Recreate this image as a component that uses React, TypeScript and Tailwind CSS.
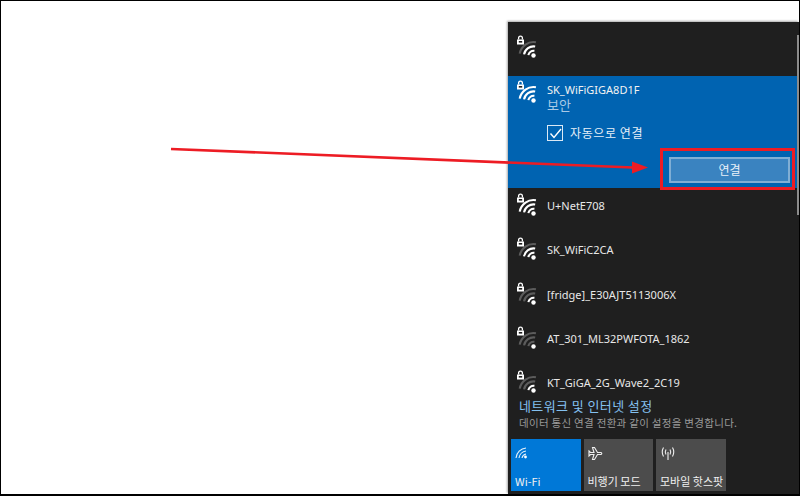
const font = "[font-family:'Noto_Sans','Noto_Sans_CJK_KR',sans-serif]";
const kr = "[font-family:'Noto_Sans_CJK_KR','Noto_Sans',sans-serif]";

function Wifi({ level }: { level: number }) {
  const arc = (r: number, on: boolean, key: number) => (
    <path
      key={key}
      d={`M${17.5 - r} 21 A${r} ${r} 0 0 1 17.5 ${21 - r}`}
      fill="none"
      stroke={on ? "#ffffff" : "#5c5c5c"}
      strokeWidth="2.1"
      transform="rotate(10 17.5 21)"
    />
  );
  return (
    <svg width="26" height="24" viewBox="0 0 26 24" className="shrink-0">
      {arc(5.2, level >= 2, 1)}
      {arc(9.6, level >= 3, 2)}
      {arc(14, level >= 4, 3)}
      <circle cx="17.5" cy="20.5" r="2.2" fill="#ffffff" />
      <rect x="1" y="4.5" width="7" height="5" fill="#ffffff" />
      <path d="M2.6 4.5 V3 a1.9 1.9 0 0 1 3.8 0 V4.5" fill="none" stroke="#ffffff" strokeWidth="1.3" />
      <rect x="2.8" y="6" width="3.4" height="1.6" fill="#1f1f1f" />
    </svg>
  );
}

function Row({ name, level }: { name: string; level: number }) {
  return (
    <div className="flex h-[44.3px] shrink-0 items-start pl-[8px] pt-[5px]">
      <Wifi level={level} />
      <span className="ml-[5px] mt-[4px] text-[11px] leading-[18px] text-[#e8e8e8]">{name}</span>
    </div>
  );
}

function Tile({ label, active, children }: { label: string; active?: boolean; children: React.ReactNode }) {
  return (
    <div className={`flex h-[52px] w-[69.5px] flex-col justify-between px-[4px] pb-[2px] pt-[7px] ${active ? "bg-[#0078d7]" : "bg-[#4c4c4c]"}`}>
      <div className="h-[16px]">{children}</div>
      <span className={`whitespace-nowrap text-[11px] leading-[16px] text-[#f0f0f0] ${kr}`}>{label}</span>
    </div>
  );
}

export default function App() {
  return (
    <div className={`relative flex h-[496px] w-[800px] justify-end overflow-hidden border-x border-t border-b-2 border-black bg-white ${font}`}>
      <div className="mt-[21px] flex w-[291px] flex-col bg-[#1f1f1f] shadow-[-1px_-1px_2px_rgba(0,0,0,0.35)]">
        <div className="flex h-[372px] flex-col overflow-hidden">
          <div className="h-[54px] shrink-0 pl-[8px] pt-[13px]">
            <Wifi level={3} />
          </div>
          <div className="h-[112px] shrink-0 bg-[#0063b1] pl-[8px] pt-[4px]">
            <div className="flex items-start">
              <Wifi level={4} />
              <div className="ml-[5px] mt-[2px]">
                <div className="text-[11px] leading-[15px] text-[#f2f2f2]">SK_WiFiGIGA8D1F</div>
                <div className={`mt-[1px] text-[13px] leading-[14px] text-[#a9c9e6] ${kr}`}>보안</div>
              </div>
            </div>
            <div className="ml-[31px] mt-[13px] flex items-center">
              <div className="flex h-[16px] w-[16px] items-center justify-center border-[1.5px] border-[#dbe9f5]">
                <svg width="13" height="13" viewBox="0 0 13 13">
                  <path d="M1.5 6.5 L5 10.5 L12 2" fill="none" stroke="#ffffff" strokeWidth="1.4" />
                </svg>
              </div>
              <span className={`ml-[7px] text-[12px] leading-[16px] tracking-[0.6px] text-[#e8f0f8] ${kr}`}>자동으로 연결</span>
            </div>
            <div className={`ml-[153px] mt-[16px] flex h-[26px] w-[121px] items-center justify-center border-2 border-[#80aed4] bg-[#3a83c0] text-[12px] text-[#e8f0f8] ${kr}`}>
              연결
            </div>
          </div>
          <Row name="U+NetE708" level={4} />
          <Row name="SK_WiFiC2CA" level={3} />
          <Row name="[fridge]_E30AJT5113006X" level={2} />
          <Row name="AT_301_ML32PWFOTA_1862" level={1} />
          <Row name="KT_GiGA_2G_Wave2_2C19" level={2} />
        </div>
        <div className={`pl-[11px] pt-[3px] ${kr}`}>
          <div className="text-[13px] leading-[18px] tracking-[0.4px] text-[#84c1f0]">네트워크 및 인터넷 설정</div>
          <div className="text-[10.5px] leading-[15px] tracking-[0.3px] text-[#9a9a9a]">데이터 통신 연결 전환과 같이 설정을 변경합니다.</div>
        </div>
        <div className="mt-[9px] flex gap-[3px] pl-[3px]">
          <Tile label="Wi-Fi" active>
            <svg width="14" height="14" viewBox="0 0 14 14">
              <path d="M1 12 A11 11 0 0 1 11 2 M4 12 A8 8 0 0 1 11 5 M7 12 A5 5 0 0 1 11 8" fill="none" stroke="#e8f2fb" strokeWidth="1.1" />
              <circle cx="10.5" cy="11" r="1.4" fill="#ffffff" />
            </svg>
          </Tile>
          <Tile label="비행기 모드">
            <svg width="15" height="15" viewBox="0 0 15 15">
              <path d="M1 5 L2.5 6.5 L6 6.5 L4.5 1.5 L6.5 1.5 L9.5 6.5 L13 6.5 Q14.6 7.5 13 8.5 L9.5 8.5 L6.5 13.5 L4.5 13.5 L6 8.5 L2.5 8.5 L1 10 Z" fill="none" stroke="#f0f0f0" strokeWidth="1.1" />
            </svg>
          </Tile>
          <Tile label="모바일 핫스팟">
            <svg width="16" height="15" viewBox="0 0 16 15">
              <path d="M8 6 V14 M6 3.5 Q4.5 6 6 8.5 M10 3.5 Q11.5 6 10 8.5 M3.5 1.5 Q1 6 3.5 10.5 M12.5 1.5 Q15 6 12.5 10.5" fill="none" stroke="#f0f0f0" strokeWidth="1.1" />
            </svg>
          </Tile>
        </div>
      </div>
      <div className="absolute right-0 top-[34px] h-[180px] w-[2px] bg-[#8c8c8c]" />
      <div className="absolute left-[659px] top-[147px] h-[42px] w-[135px] border-[3px] border-[#ed1c24]" />
      <svg className="absolute left-0 top-0" width="800" height="496">
        <path d="M170 148 L632 166.5" stroke="#ed1c24" strokeWidth="2.6" fill="none" />
        <path d="M631 160.5 L647 166.5 L631 172.5 Z" fill="#ed1c24" />
      </svg>
    </div>
  );
}
